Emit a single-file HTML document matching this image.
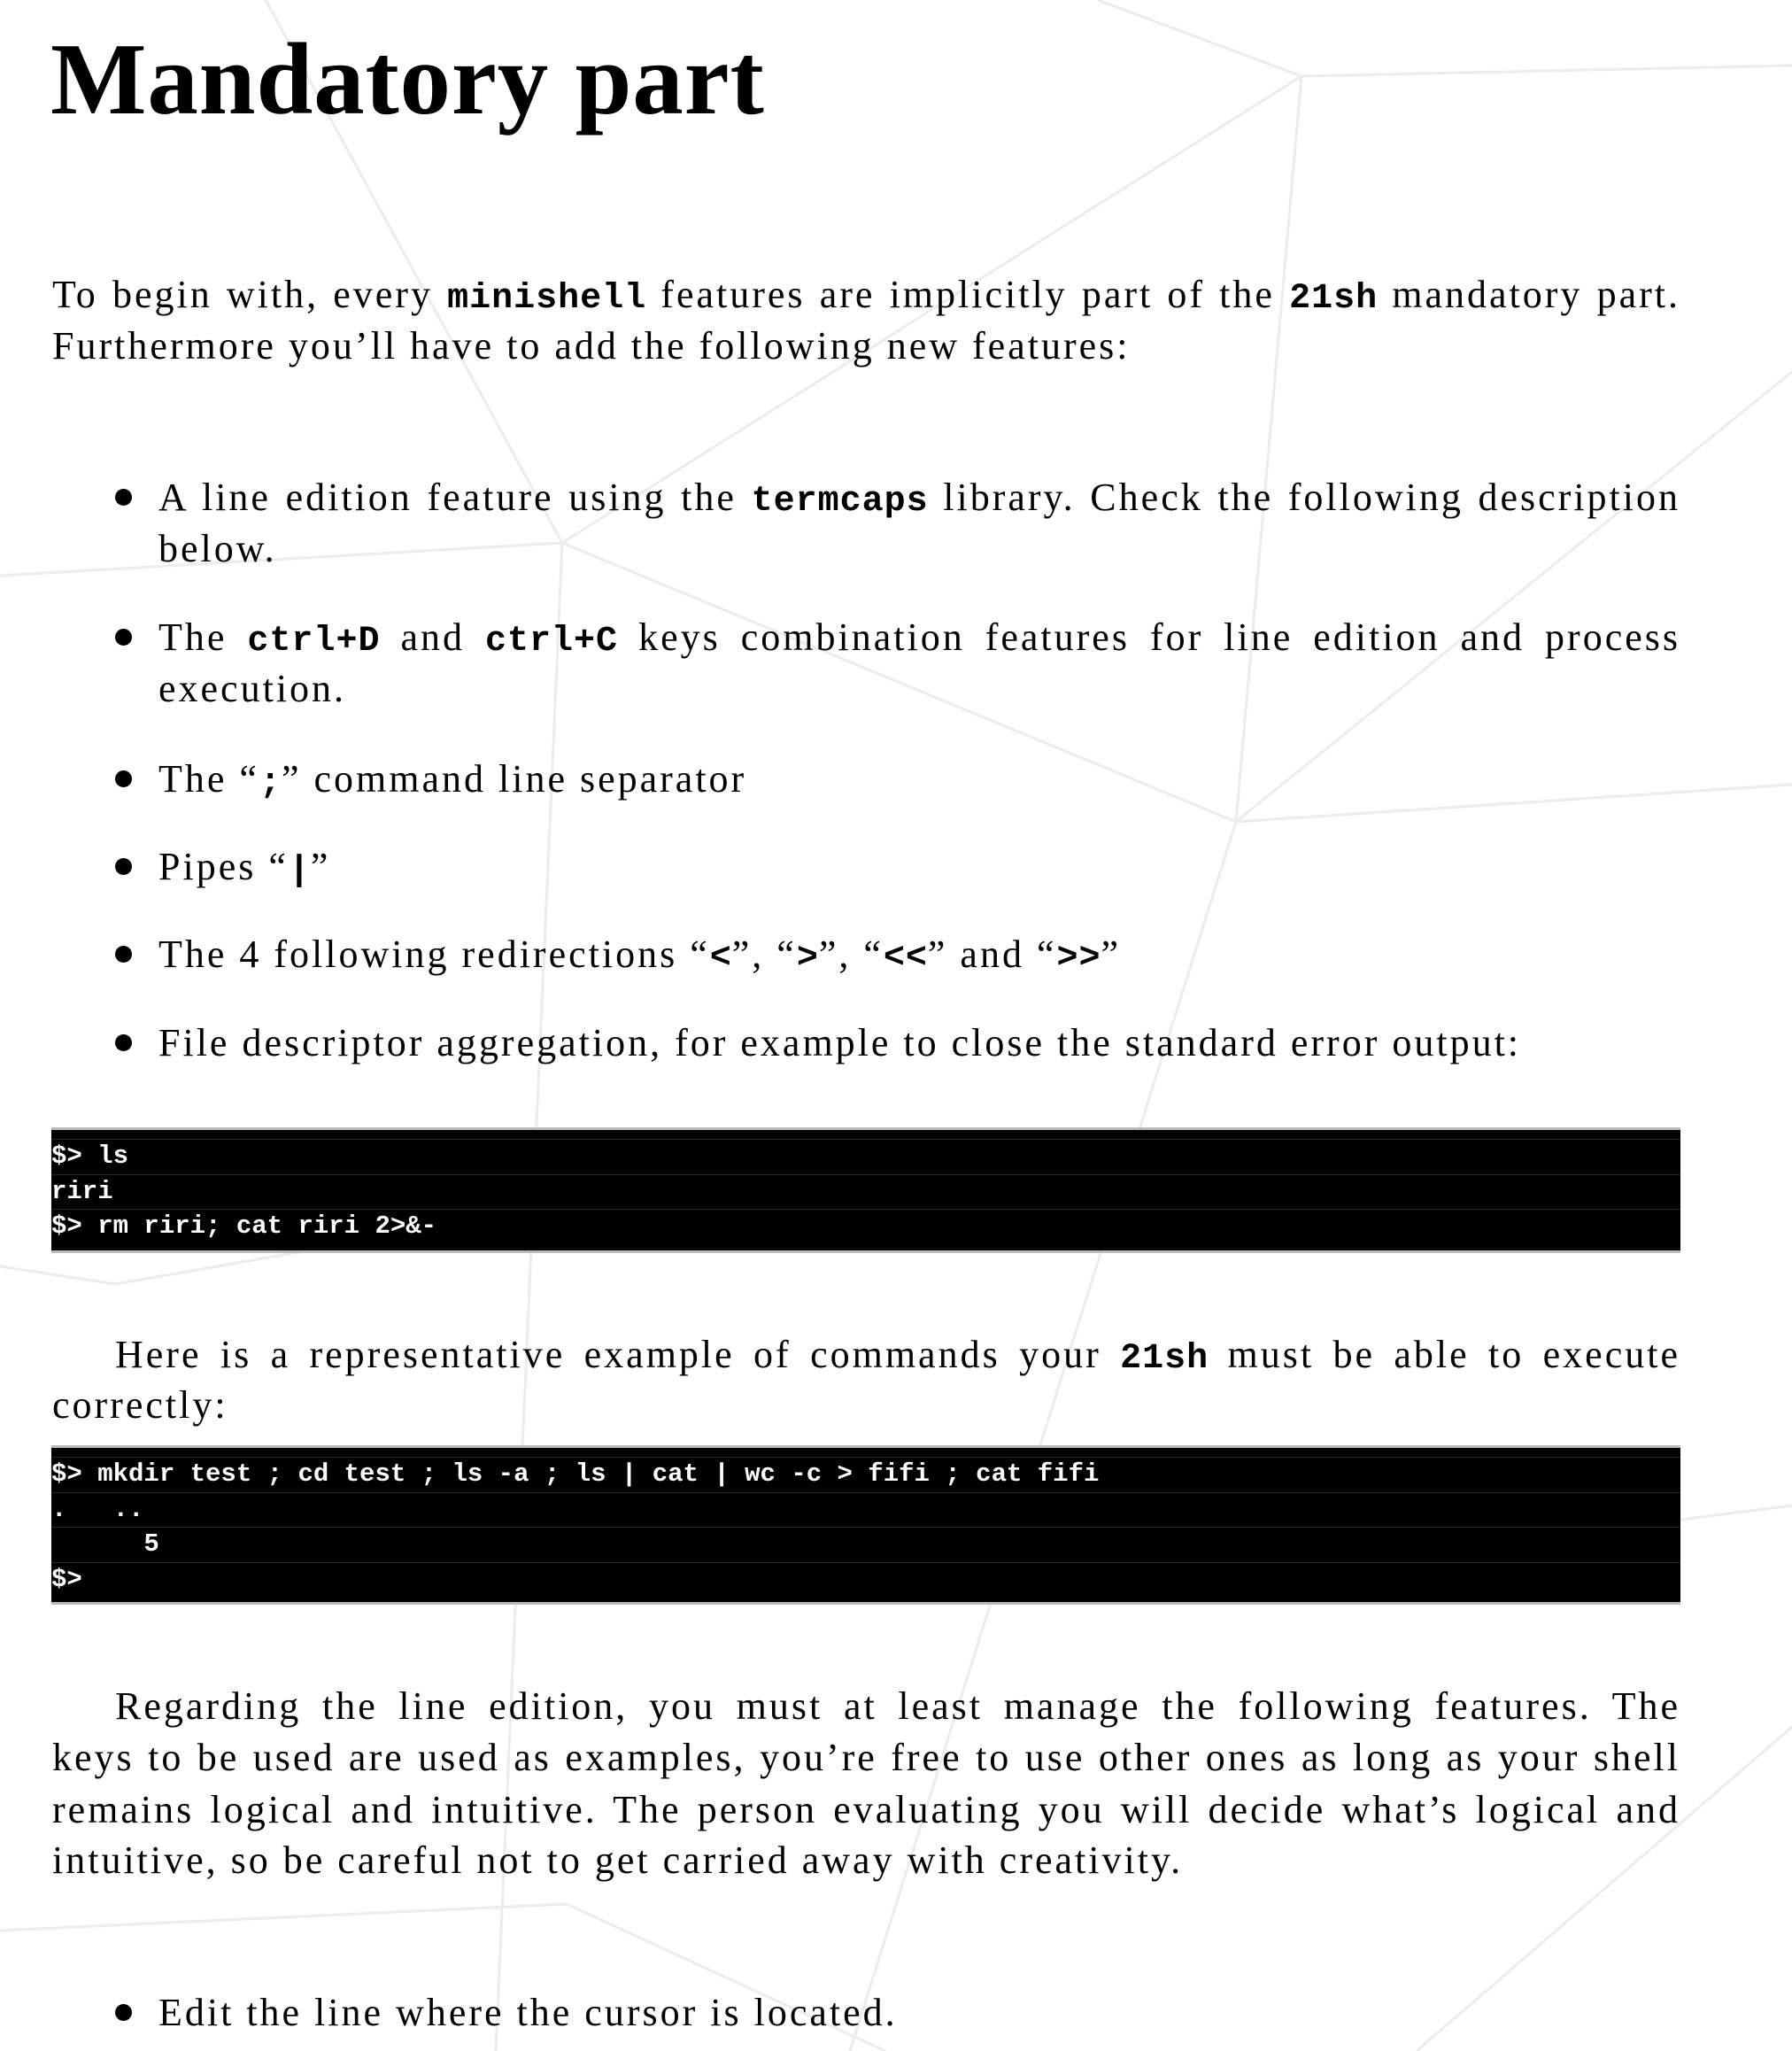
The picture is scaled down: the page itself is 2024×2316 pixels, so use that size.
<!DOCTYPE html>
<html><head><meta charset="utf-8">
<style>
html,body{margin:0;padding:0;background:#fff;}
body{width:2024px;height:2316px;position:relative;overflow:hidden;font-family:"Liberation Serif",serif;color:#000;}
.l{position:absolute;left:59px;width:1839px;font-size:44px;line-height:58px;white-space:nowrap;letter-spacing:3px;}
.j{text-align:justify;text-align-last:justify;white-space:normal;}
.b{left:179px;width:1719px;}
.dot{position:absolute;left:130px;width:19px;height:19px;border-radius:50%;background:#000;}
.t{font-family:"Liberation Mono",monospace;font-weight:bold;font-size:40px;letter-spacing:1px;}
.code{position:absolute;left:58px;width:1840px;background:#000;color:#fff;font-family:"Liberation Mono",monospace;font-weight:bold;font-size:29px;box-sizing:border-box;border-top:3px solid #bbb;border-bottom:3px solid #bbb;}
.code div{height:38.5px;line-height:38px;border-top:1px solid #2a2a2a;white-space:pre;}
.code div:first-child{margin-top:10px;}
h1{position:absolute;left:57px;top:25px;margin:0;font-size:115px;line-height:130px;font-weight:bold;letter-spacing:0.8px;}
</style></head><body>
<svg width="2024" height="2316" style="position:absolute;left:0;top:0" stroke="#ececec" stroke-width="3" fill="none">
<path d="M0 650 L635 613 L1470 86 L2024 74"/>
<path d="M1470 86 L1240 0"/>
<path d="M1470 86 L1396 928 L2024 886"/>
<path d="M635 613 L1396 928 L960 2316"/>
<path d="M635 613 L300 0"/>
<path d="M635 613 L560 2316"/>
<path d="M0 1430 L130 1450 L1050 1290"/>
<path d="M1396 928 L2024 420"/>
<path d="M1400 1780 L2024 1700"/>
<path d="M1600 2316 L2024 1950"/>
<path d="M0 2180 L640 2150 L1000 2316"/>
</svg>
<h1>Mandatory part</h1>
<div class="l j" style="top:304px">To begin with, every <span class="t">minishell</span> features are implicitly part of the <span class="t">21sh</span> mandatory part.</div>
<div class="l" style="top:362px">Furthermore you’ll have to add the following new features:</div>

<div class="dot" style="top:552px"></div>
<div class="l b j" style="top:533px">A line edition feature using the <span class="t">termcaps</span> library. Check the following description</div>
<div class="l b" style="top:591px">below.</div>
<div class="dot" style="top:710px"></div>
<div class="l b j" style="top:691px">The <span class="t">ctrl+D</span> and <span class="t">ctrl+C</span> keys combination features for line edition and process</div>
<div class="l b" style="top:749px">execution.</div>
<div class="dot" style="top:870px"></div>
<div class="l b" style="top:851px">The “<span class="t">;</span>” command line separator</div>
<div class="dot" style="top:969px"></div>
<div class="l b" style="top:950px">Pipes “<span class="t">|</span>”</div>
<div class="dot" style="top:1068px"></div>
<div class="l b" style="top:1049px">The 4 following redirections “<span class="t">&lt;</span>”, “<span class="t">&gt;</span>”, “<span class="t">&lt;&lt;</span>” and “<span class="t">&gt;&gt;</span>”</div>
<div class="dot" style="top:1168px"></div>
<div class="l b" style="top:1149px">File descriptor aggregation, for example to close the standard error output:</div>

<div class="code" style="top:1273px;height:142px">
<div>$&gt; ls</div><div>riri</div><div>$&gt; rm riri; cat riri 2&gt;&amp;-</div>
</div>

<div class="l j" style="top:1501px;padding-left:71px;width:1768px">Here is a representative example of commands your <span class="t">21sh</span> must be able to execute</div>
<div class="l" style="top:1558px">correctly:</div>

<div class="code" style="top:1632px;height:180px">
<div>$&gt; mkdir test ; cd test ; ls -a ; ls | cat | wc -c &gt; fifi ; cat fifi</div><div>.   ..</div><div>      5</div><div>$&gt;</div>
</div>

<div class="l j" style="top:1898px;padding-left:71px;width:1768px">Regarding the line edition, you must at least manage the following features. The</div>
<div class="l j" style="top:1956px">keys to be used are used as examples, you’re free to use other ones as long as your shell</div>
<div class="l j" style="top:2015px">remains logical and intuitive. The person evaluating you will decide what’s logical and</div>
<div class="l" style="top:2072px">intuitive, so be careful not to get carried away with creativity.</div>

<div class="dot" style="top:2263px"></div>
<div class="l b" style="top:2244px">Edit the line where the cursor is located.</div>
</body></html>
